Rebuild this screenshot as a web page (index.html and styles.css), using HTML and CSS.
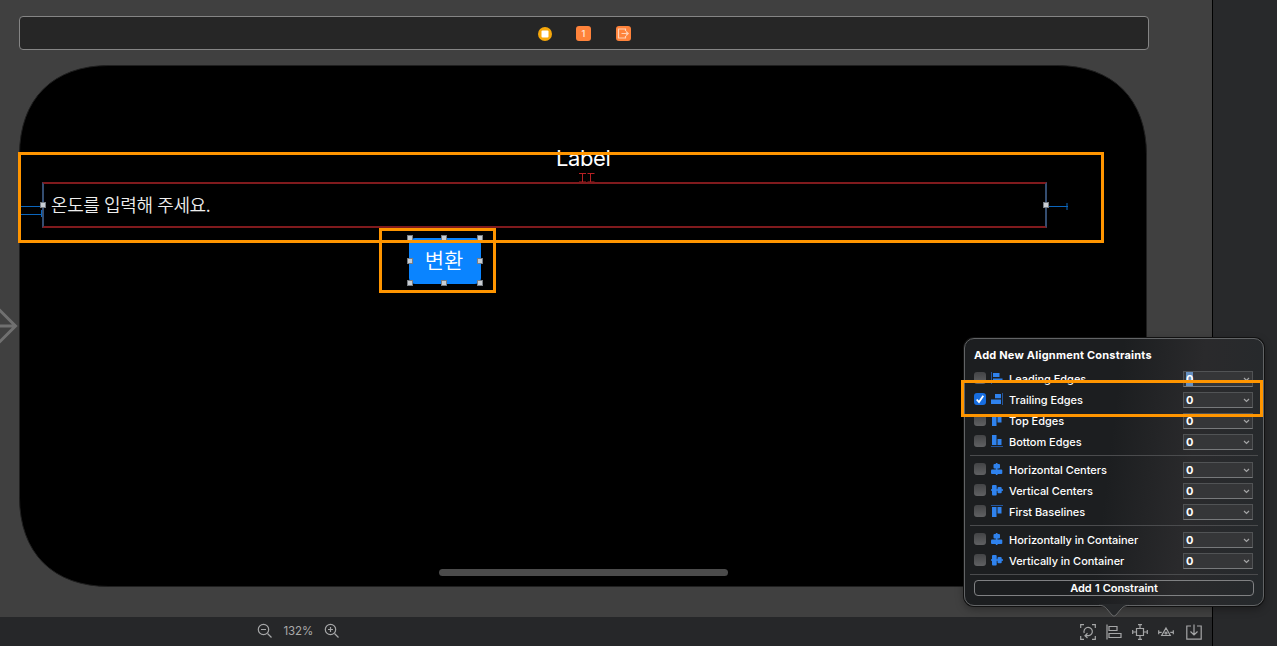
FILE: index.html
```html
<!DOCTYPE html>
<html lang="ko">
<head>
<meta charset="utf-8">
<title>Interface Builder</title>
<link rel="stylesheet" href="styles.css">
</head>
<body>
<svg class="defs" aria-hidden="true">
  <symbol id="leading" viewBox="0 0 12 12"><path d="M.5 0v12" stroke="#24569d"/><path d="M2 1h6.500v4H2zM2 6.500h9.500V11H2z"/></symbol>
  <symbol id="trailing" viewBox="0 0 12 12"><path d="M11.500 0v12" stroke="#24569d"/><path d="M4 1h6v4.200H4zM0 6.500h10V11H0z"/></symbol>
  <symbol id="top" viewBox="0 0 12 12"><path d="M0 .5h12" stroke="#24569d"/><path d="M1 2h4.500v10H1zM6.500 2h4v6.500h-4z"/></symbol>
  <symbol id="bottom" viewBox="0 0 12 12"><path d="M0 11.500h12" stroke="#24569d"/><path d="M1 0h4.500v10H1zM6.500 4h4v6h-4z"/></symbol>
  <symbol id="hcenter" viewBox="0 0 12 12"><path d="M4.800 0h1.700v12H4.800z"/><rect x="2.500" y="1" width="6.500" height="4.500" rx="1"/><rect x="0" y="6.500" width="11.300" height="4.500" rx="1"/></symbol>
  <symbol id="vcenter" viewBox="0 0 12 12"><path d="M0 5.200h12v1.600H0z"/><rect x="1" y="1" width="4.700" height="10.500" rx="1"/><rect x="6.500" y="3" width="4.200" height="6.300" rx="1"/></symbol>
</svg>
<div class="window">
  <main class="editor">
    <section class="canvas">
      <header class="scene-bar">
        <svg width="14" height="14" viewBox="0 0 14 14"><circle cx="7" cy="7" r="7" fill="#f7a80b"/><rect x="3.500" y="3.500" width="7" height="7" rx="1" fill="#fff"/></svg>
        <span class="responder">1</span>
        <svg width="15" height="15" viewBox="0 0 15 15"><rect width="15" height="15" rx="3" fill="#ff833b"/><path d="M9.500 5V3h-7v9h7v-2M5.500 7.500H12M10 5.500l2.200 2-2.200 2" fill="none" stroke="#ffd1b5" stroke-width="1.200"/></svg>
      </header>
      <svg class="entry-arrow" width="18" height="36" viewBox="0 0 18 36"><path d="M-2 18H15M-2 0.500L15.500 18L-2 35.500" fill="none" stroke="#707070" stroke-width="3"/></svg>
      <svg class="device" width="1128" height="522" viewBox="0 0 1128 522"><path d="M90 .5H1038C1094 .5 1127.500 34 1127.500 90V432C1127.500 488 1094 521.500 1038 521.500H90C34 521.500 .5 488 .5 432V90C.5 34 34 .5 90 .5Z" stroke="#1f1f1f"/></svg>
      <div class="label">Label</div>
      <svg class="gap-mark" width="16" height="11" viewBox="0 0 16 11"><path d="M0 1.500h7M8.500 1.500h7M3.500 1v9M11.500 1v9M0 10h7M8.500 10h7" stroke="#b52023" fill="none"/></svg>
      <div class="text-field">온도를 입력해 주세요.</div>
      <svg class="pin pin-left" width="22" height="12" viewBox="0 0 22 12"><path d="M0 1.500h21M0 9.500h21M20.500 5v7" stroke="#0b66bd" fill="none"/></svg>
      <svg class="pin pin-right" width="21" height="8" viewBox="0 0 21 8"><path d="M0 4.500h20M19 1v7" stroke="#0b66bd" fill="none"/></svg>
      <i class="handle field-start"></i><i class="handle field-end"></i>
      <div class="convert">변환
        <i class="handle nw"></i><i class="handle n"></i><i class="handle ne"></i><i class="handle w"></i><i class="handle e"></i><i class="handle sw"></i><i class="handle s"></i><i class="handle se"></i>
      </div>
      <div class="home-indicator"></div>
      <div class="mark mark-field"></div>
      <div class="mark mark-button"></div>
    </section>
    <footer class="toolbar">
      <div class="zoom">
        <svg width="16" height="16" viewBox="0 0 16 16"><circle cx="6.500" cy="6.500" r="5.200"/><path d="M4 6.500h5M10.500 10.500l4 4"/></svg>
        <span>132%</span>
        <svg width="16" height="16" viewBox="0 0 16 16"><circle cx="6.500" cy="6.500" r="5.200"/><path d="M4 6.500h5M6.500 4v5M10.500 10.500l4 4"/></svg>
      </div>
      <div class="layout-tools">
        <svg width="16" height="16" viewBox="0 0 16 16"><path d="M4 .7H.7V4M12 .7h3.300V4M4 15.300H.7V12M12 15.300h3.300V12M4.200 9A4.200 4.200 0 1 1 8.800 11.700L5.500 11.700M7.500 9.300L5 11.700L7.500 14"/></svg>
        <svg width="16" height="16" viewBox="0 0 16 16"><path d="M1 .5v15M3 2.500h8v4H3zM3 9.500h12v4H3z"/></svg>
        <svg width="16" height="16" viewBox="0 0 16 16"><path d="M4.500 4.500h7v7h-7zM8 4.500V1M6 .7h4M8 11.500V15M6 15.300h4M4.500 8H1M.7 6v4M11.500 8H15M15.300 6v4"/></svg>
        <svg width="16" height="16" viewBox="0 0 16 16"><path d="M8 4l4.300 7.500H3.700zM.7 6.300v4M.7 8.300h3M15.300 6.300v4M15.300 8.300h-3"/><circle cx="8" cy="9" r="1"/></svg>
        <svg width="16" height="16" viewBox="0 0 16 16"><path d="M5 2H.8v13.200h14.400V2H11M8 .5v10M4.500 7.500L8 11l3.500-3.500"/></svg>
      </div>
    </footer>
  </main>
  <aside class="inspector"></aside>
</div>

<section class="popover">
  <h1>Add New Alignment Constraints</h1>
  <div class="group">
    <label class="row"><i class="check"></i><svg class="icon"><use href="#leading"/></svg><span class="name">Leading Edges</span><span class="combo"><b class="selected">0</b><svg width="7" height="5"><path d="M1 1l2.500 2.500L6 1"/></svg></span></label>
    <label class="row"><i class="check on"><svg width="12" height="12" viewBox="0 0 12 12"><path d="M2.700 6.500l2.300 2.600L9.300 2.800"/></svg></i><svg class="icon"><use href="#trailing"/></svg><span class="name">Trailing Edges</span><span class="combo"><b>0</b><svg width="7" height="5"><path d="M1 1l2.500 2.500L6 1"/></svg></span></label>
    <label class="row"><i class="check"></i><svg class="icon"><use href="#top"/></svg><span class="name">Top Edges</span><span class="combo"><b>0</b><svg width="7" height="5"><path d="M1 1l2.500 2.500L6 1"/></svg></span></label>
    <label class="row"><i class="check"></i><svg class="icon"><use href="#bottom"/></svg><span class="name">Bottom Edges</span><span class="combo"><b>0</b><svg width="7" height="5"><path d="M1 1l2.500 2.500L6 1"/></svg></span></label>
  </div>
  <div class="group">
    <label class="row"><i class="check"></i><svg class="icon"><use href="#hcenter"/></svg><span class="name">Horizontal Centers</span><span class="combo"><b>0</b><svg width="7" height="5"><path d="M1 1l2.500 2.500L6 1"/></svg></span></label>
    <label class="row"><i class="check"></i><svg class="icon"><use href="#vcenter"/></svg><span class="name">Vertical Centers</span><span class="combo"><b>0</b><svg width="7" height="5"><path d="M1 1l2.500 2.500L6 1"/></svg></span></label>
    <label class="row"><i class="check"></i><svg class="icon"><use href="#top"/></svg><span class="name">First Baselines</span><span class="combo"><b>0</b><svg width="7" height="5"><path d="M1 1l2.500 2.500L6 1"/></svg></span></label>
  </div>
  <div class="group">
    <label class="row"><i class="check"></i><svg class="icon"><use href="#hcenter"/></svg><span class="name">Horizontally in Container</span><span class="combo"><b>0</b><svg width="7" height="5"><path d="M1 1l2.500 2.500L6 1"/></svg></span></label>
    <label class="row"><i class="check"></i><svg class="icon"><use href="#vcenter"/></svg><span class="name">Vertically in Container</span><span class="combo"><b>0</b><svg width="7" height="5"><path d="M1 1l2.500 2.500L6 1"/></svg></span></label>
  </div>
  <button class="add">Add 1 Constraint</button>
  <svg class="tail" width="30" height="14" viewBox="0 0 30 14"><path d="M0 0V1.500C5 1.500 6 3 8 5L13 11Q15 13.500 17 11L22 5C24 3 25 1.500 30 1.500V0Z" fill="#26282a"/><path d="M0 1.500C5 1.500 6 3 8 5L13 11Q15 13.500 17 11L22 5C24 3 25 1.500 30 1.500" fill="none" stroke="#68696a"/></svg>
</section>
<div class="mark mark-row"></div>
</body>
</html>
```

FILE: styles.css
```css
* { box-sizing: border-box; }
body {
  margin: 0;
  position: relative;
  width: 1277px;
  height: 646px;
  overflow: hidden;
  background: #28292b;
  color: #fff;
  font-family: Inter, "Noto Sans CJK KR", sans-serif;
}
.defs { position: absolute; width: 0; height: 0; }
.window { display: grid; grid-template-columns: 1212px 1fr; height: 646px; }
.editor { display: grid; grid-template-rows: 617px 29px; }
.inspector { background: #28292b; border-left: 1px solid #000; }
.canvas { position: relative; background: #404040; padding: 16px 63.500px 0 18.500px; overflow: hidden; }
.scene-bar {
  display: flex;
  align-items: center;
  justify-content: center;
  gap: 24.500px;
  height: 34px;
  padding: 1px 0 0 1px;
  border: 1px solid #858585;
  border-radius: 4px;
  background: #262626;
}
.scene-bar svg { display: block; }
.responder {
  width: 15px;
  height: 15px;
  border-radius: 3px;
  background: #ff833b;
  color: #ffe0cd;
  font-size: 9px;
  font-weight: 600;
  line-height: 15px;
  text-align: center;
}

/* Storyboard scene */
.device { position: absolute; left: 19px; top: 65px; }
.entry-arrow { position: absolute; left: 0; top: 308px; }
.label {
  position: absolute;
  left: 556px;
  top: 145px;
  font-size: 22px;
  line-height: 27px;
  letter-spacing: -0.4px;
}
.gap-mark { position: absolute; left: 579px; top: 172px; }
.text-field {
  position: absolute;
  left: 42px;
  top: 182px;
  width: 1005px;
  height: 46px;
  padding-left: 7px;
  border: 2px solid;
  border-color: #801a1d #344d70;
  font: 350 18px/40px "Noto Sans CJK KR", sans-serif;
  letter-spacing: -0.4px;
  color: #eee;
}
.pin { position: absolute; }
.pin-left { left: 21px; top: 205px; }
.pin-right { left: 1048px; top: 202px; }
.convert {
  position: absolute;
  left: 409px;
  top: 238px;
  width: 72px;
  height: 46px;
  padding-right: 2px;
  border-radius: 6px;
  background: #0a84ff;
  font: 350 21px/42px "Noto Sans CJK KR", sans-serif;
  text-align: center;
}
.handle { position: absolute; width: 6px; height: 6px; background: #c8cdd2; border: 1px solid #777d83; }
.field-start { left: 40px; top: 202px; }
.field-end { left: 1043px; top: 202px; }
.nw, .n, .ne { top: -3px; }
.w, .e { top: 20px; }
.sw, .s, .se { bottom: -2px; }
.nw, .w, .sw { left: -2px; }
.n, .s { left: 32px; }
.ne, .e, .se { right: -2px; }
.home-indicator {
  position: absolute;
  left: 439px;
  top: 569px;
  width: 289px;
  height: 7px;
  border-radius: 4px;
  background: #4b4b4b;
}
.mark { position: absolute; border: 3px solid #ff9500; }
.mark-field { left: 18px; top: 152px; width: 1086px; height: 91px; }
.mark-button { left: 379px; top: 228px; width: 117px; height: 65px; }
.mark-row { left: 961px; top: 380px; width: 302px; height: 37px; }

/* Bottom bar */
.toolbar {
  display: flex;
  align-items: center;
  justify-content: space-between;
  padding: 0 10.500px 1px 257px;
  background: #262729;
  color: #aaa;
}
.toolbar svg { display: block; fill: none; stroke: #a5a6a7; stroke-width: 1.2; }
.zoom { display: flex; align-items: center; gap: 10.500px; font-size: 11.5px; letter-spacing: -.1px; }
.layout-tools { display: flex; gap: 10px; padding-top: 1px; }
.layout-tools svg:last-child { margin-left: 2px; }

/* Alignment popover */
.popover {
  position: absolute;
  left: 964px;
  top: 338px;
  width: 300px;
  height: 268px;
  padding: 8px 5px 0;
  border: 1px solid #626466;
  border-radius: 10px;
  background: linear-gradient(97deg, #1c1e20 0%, #1c1e20 48%, #2a2a2c 73%, #25292c 100%);
  box-shadow: 0 0 0 1px #111, 0 3px 9px rgba(0, 0, 0, .35);
}
.popover h1 { margin: 0 0 5px; padding-left: 4px; font-size: 11px; line-height: 16px; font-weight: 700; letter-spacing: .21px; }
.group { padding-bottom: 3px; border-bottom: 1px solid #4a4b4d; margin-bottom: 3px; }
.row { display: flex; align-items: center; height: 21px; padding: 0 5px 0 4px; }
.check {
  width: 12px;
  height: 12px;
  margin-top: -1px;
  border-radius: 3px;
  background: linear-gradient(#434446, #606163);
}
.check.on { background: #176de0; }
.check svg { display: block; fill: none; stroke: #fff; stroke-width: 1.8; }
.icon { width: 12px; height: 12px; margin: -1px 6px 0 5px; fill: #2f82ed; }
.name { flex: 1; font-size: 11px; font-weight: 500; line-height: 20px; letter-spacing: -.03px; }
.combo {
  display: flex;
  align-items: center;
  justify-content: space-between;
  width: 70px;
  height: 16px;
  padding: 0 2px;
  border: 1px solid #515355;
  border-bottom-color: #77797b;
  background: #353638;
}
.combo b { font-size: 11px; line-height: 14px; font-weight: 700; }
.combo .selected { background: #668fc0; }
.combo svg { margin-top: 1px; fill: none; stroke: #a4a5a6; stroke-width: 1.2; }
.add {
  display: block;
  width: 280px;
  height: 16px;
  margin: 5px 0 0 4px;
  padding: 0;
  border: 1px solid #808183;
  border-radius: 4px;
  background: transparent;
  color: #fff;
  font: 600 11px/14px Inter, sans-serif;
  word-spacing: .5px;
  letter-spacing: -.05px;
}
.tail { position: absolute; left: 134px; top: 265px; }
```
